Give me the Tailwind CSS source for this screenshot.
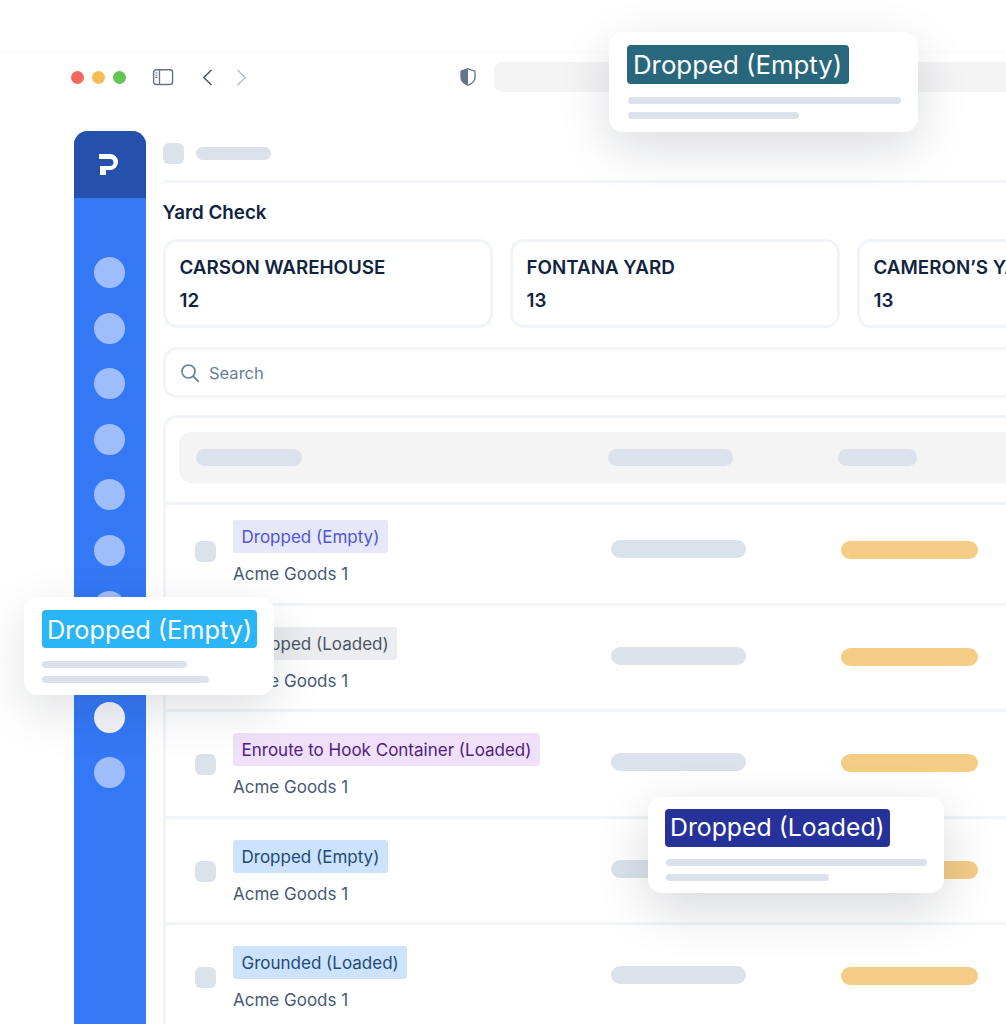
<!DOCTYPE html>
<html>
<head>
<meta charset="utf-8">
<script src="https://cdn.jsdelivr.net/npm/@tailwindcss/browser@4"></script>
</head>
<body class="bg-white font-['Inter',sans-serif]">
<div class="relative w-[1006px] h-[1024px] overflow-hidden bg-white">
  <!-- browser chrome -->
  <div class="mt-[51px] h-[1px] bg-[#fafbfc]"></div>
  <div class="flex items-center h-[50px] pl-[71px]">
    <div class="flex gap-[8px] shrink-0">
      <span class="w-[13px] h-[13px] rounded-full bg-[#f0695e]"></span>
      <span class="w-[13px] h-[13px] rounded-full bg-[#f6bd52]"></span>
      <span class="w-[13px] h-[13px] rounded-full bg-[#62c554]"></span>
    </div>
    <svg class="ml-[26px] shrink-0" width="22" height="18" viewBox="0 0 22 18" fill="none"><rect x="1.600" y="1.700" width="19" height="14.800" rx="2.500" stroke="#64748b" stroke-width="1.400"/><path d="M7.500 1.700v14.800" stroke="#64748b" stroke-width="1.300"/><path d="M3.500 5h2M3.500 7.200h2M3.500 9.400h2" stroke="#64748b" stroke-width="1.100"/></svg>
    <svg class="ml-[28px] shrink-0" width="11" height="17" viewBox="0 0 11 17" fill="none"><path d="M9.500 1 1.800 8.500l7.700 7.500" stroke="#475569" stroke-width="1.500"/></svg>
    <svg class="ml-[23px] shrink-0" width="11" height="17" viewBox="0 0 11 17" fill="none"><path d="M1.500 1 9.200 8.500 1.500 16" stroke="#b8c0cc" stroke-width="1.500"/></svg>
    <svg class="ml-[213px] shrink-0" width="16" height="18" viewBox="0 0 16 18" fill="none"><path d="M8 .8 15 3.200v6.300c0 3.600-3 6.200-7 7.700-4-1.500-7-4.100-7-7.700V3.200z" stroke="#64748b" stroke-width="1.300" fill="#fff"/><path d="M8 .8 1 3.200v6.300c0 3.600 3 6.200 7 7.700z" fill="#64748b"/></svg>
    <div class="ml-[18px] w-[520px] h-[30px] rounded-[8px] bg-[#f4f4f5] shrink-0"></div>
  </div>
  <div class="flex gap-[17px] pl-[74px] mt-[29px]">
    <!-- sidebar -->
    <div class="w-[72px] h-[893px] shrink-0 rounded-t-[14px] bg-[#3478f6] overflow-hidden">
      <div class="h-[67px] bg-[#2551ad] flex items-center justify-center pr-[3px]">
        <svg width="20" height="21" viewBox="0 0 20 21" fill="#fff"><path d="M0 0h11a8 8 0 0 1 0 16H7v5H1v-9h10a3 3 0 0 0 0-7H0z"/></svg>
      </div>
      <div class="flex flex-col items-center gap-[24.600px] pt-[59px] pr-[2px]">
        <span class="w-[31px] h-[31px] rounded-full bg-[#9fbcfb]"></span>
        <span class="w-[31px] h-[31px] rounded-full bg-[#9fbcfb]"></span>
        <span class="w-[31px] h-[31px] rounded-full bg-[#9fbcfb]"></span>
        <span class="w-[31px] h-[31px] rounded-full bg-[#9fbcfb]"></span>
        <span class="w-[31px] h-[31px] rounded-full bg-[#9fbcfb]"></span>
        <span class="w-[31px] h-[31px] rounded-full bg-[#9fbcfb]"></span>
        <span class="w-[31px] h-[31px] rounded-full bg-[#9fbcfb]"></span>
        <span class="w-[31px] h-[31px] rounded-full bg-[#9fbcfb]"></span>
        <span class="w-[31px] h-[31px] rounded-full bg-[#f3f5f9]"></span>
        <span class="w-[31px] h-[31px] rounded-full bg-[#9fbcfb]"></span>
      </div>
    </div>
    <!-- main -->
    <div class="w-[900px] shrink-0">
      <div class="flex items-center gap-[12px] h-[52px] pb-[5px] border-b-[3px] border-[#f1f4f9]">
        <span class="w-[21px] h-[21px] rounded-[6px] bg-[#dce2ec] -ml-[0.500px]"></span>
        <span class="w-[75px] h-[13px] rounded-full bg-[#dce2ec]"></span>
      </div>
      <h1 class="mt-[18px] text-[18.800px] leading-[24px] font-semibold -ml-[0.500px] text-[#0f2440]">Yard Check</h1>
      <div class="flex gap-[17px] mt-[14px]">
        <div class="w-[330px] h-[89px] shrink-0 border-[3px] border-[#f1f5f9] rounded-[14px] pl-[13.500px] pt-[14px] text-[18.800px] font-semibold text-[#0f2440]"><div class="leading-[24px]">CARSON WAREHOUSE</div><div class="leading-[24px] mt-[9px]">12</div></div>
        <div class="w-[330px] h-[89px] shrink-0 border-[3px] border-[#f1f5f9] rounded-[14px] pl-[13.500px] pt-[14px] text-[18.800px] font-semibold text-[#0f2440]"><div class="leading-[24px]">FONTANA YARD</div><div class="leading-[24px] mt-[9px]">13</div></div>
        <div class="w-[330px] h-[89px] shrink-0 border-[3px] border-[#f1f5f9] rounded-[14px] pl-[13.500px] pt-[14px] text-[18.800px] font-semibold text-[#0f2440]"><div class="leading-[24px] whitespace-nowrap">CAMERON’S YARD</div><div class="leading-[24px] mt-[9px]">13</div></div>
      </div>
      <div class="mt-[19px] h-[51px] border-[3px] border-[#f1f5f9] rounded-[14px] flex items-center pl-[14px] gap-[9px]">
        <svg class="shrink-0" width="20" height="20" viewBox="0 0 20 20" fill="none"><circle cx="8.500" cy="8.500" r="6.500" stroke="#64809c" stroke-width="1.700"/><path d="m13.300 13.300 5 5" stroke="#64809c" stroke-width="1.700" stroke-linecap="round"/></svg>
        <span class="mt-[2px] text-[16.500px] text-[#64809c]">Search</span>
      </div>
      <div class="mt-[17px] border-[3px] border-[#f1f5f9] rounded-t-[14px] pt-[14px]">
        <div class="ml-[13px] h-[51px] rounded-[12px] bg-[#f4f4f5]">
          <div class="flex items-center h-full pl-[17px]">
            <span class="w-[106px] h-[17px] rounded-full bg-[#dce2ec]"></span>
            <span class="ml-[306px] w-[125px] h-[17px] rounded-full bg-[#dce2ec]"></span>
            <span class="ml-[105px] w-[79px] h-[17px] rounded-full bg-[#dce2ec]"></span>
          </div>
        </div>
        <div class="mt-[18.500px] flex flex-col">
          <div class="h-[101px] border-t-[3px] border-[#f1f5f9] flex items-start pl-[29px] pt-[15px]">
            <span class="mt-[21px] w-[21px] h-[21px] rounded-[6px] bg-[#dce2ec] shrink-0"></span>
            <div class="ml-[17px] w-[378px] shrink-0">
              <span class="inline-block align-top h-[33px] leading-[35px] px-[8.500px] rounded-[3px] text-[17px] bg-[#e7e7fb] text-[#4f55d8]">Dropped (Empty)</span>
              <div class="mt-[9px] text-[17px] leading-[24px] text-[#475a75]">Acme Goods 1</div>
            </div>
            <span class="mt-[20px] w-[135px] h-[18px] rounded-full bg-[#dce2ec] shrink-0"></span>
            <span class="mt-[21px] ml-[95px] w-[137px] h-[18px] rounded-full bg-[#f5cd87] shrink-0"></span>
          </div>
          <div class="h-[106.500px] border-t-[3px] border-[#f1f5f9] flex items-start pl-[29px] pt-[21px]">
            <span class="mt-[21px] w-[21px] h-[21px] rounded-[6px] bg-[#dce2ec] shrink-0"></span>
            <div class="ml-[17px] w-[378px] shrink-0">
              <span class="inline-block align-top h-[33px] leading-[35px] px-[8.500px] rounded-[3px] text-[17px] bg-[#ebedf0] text-[#4a5568]">Dropped (Loaded)</span>
              <div class="mt-[9px] text-[17px] leading-[24px] text-[#475a75]">Acme Goods 1</div>
            </div>
            <span class="mt-[20px] w-[135px] h-[18px] rounded-full bg-[#dce2ec] shrink-0"></span>
            <span class="mt-[21px] ml-[95px] w-[137px] h-[18px] rounded-full bg-[#f5cd87] shrink-0"></span>
          </div>
          <div class="h-[106.500px] border-t-[3px] border-[#f1f5f9] flex items-start pl-[29px] pt-[21px]">
            <span class="mt-[21px] w-[21px] h-[21px] rounded-[6px] bg-[#dce2ec] shrink-0"></span>
            <div class="ml-[17px] w-[378px] shrink-0">
              <span class="inline-block align-top h-[33px] leading-[35px] px-[8.500px] rounded-[3px] text-[17px] bg-[#f0e0fa] text-[#4f1f7e] whitespace-nowrap">Enroute to Hook Container (Loaded)</span>
              <div class="mt-[9px] text-[17px] leading-[24px] text-[#475a75]">Acme Goods 1</div>
            </div>
            <span class="mt-[20px] w-[135px] h-[18px] rounded-full bg-[#dce2ec] shrink-0"></span>
            <span class="mt-[21px] ml-[95px] w-[137px] h-[18px] rounded-full bg-[#f5cd87] shrink-0"></span>
          </div>
          <div class="h-[106.500px] border-t-[3px] border-[#f1f5f9] flex items-start pl-[29px] pt-[21px]">
            <span class="mt-[21px] w-[21px] h-[21px] rounded-[6px] bg-[#dce2ec] shrink-0"></span>
            <div class="ml-[17px] w-[378px] shrink-0">
              <span class="inline-block align-top h-[33px] leading-[35px] px-[8.500px] rounded-[3px] text-[17px] bg-[#cde2fb] text-[#1e4a78]">Dropped (Empty)</span>
              <div class="mt-[9px] text-[17px] leading-[24px] text-[#475a75]">Acme Goods 1</div>
            </div>
            <span class="mt-[20px] w-[135px] h-[18px] rounded-full bg-[#dce2ec] shrink-0"></span>
            <span class="mt-[21px] ml-[95px] w-[137px] h-[18px] rounded-full bg-[#f5cd87] shrink-0"></span>
          </div>
          <div class="h-[106.500px] border-t-[3px] border-[#f1f5f9] flex items-start pl-[29px] pt-[21px]">
            <span class="mt-[21px] w-[21px] h-[21px] rounded-[6px] bg-[#dce2ec] shrink-0"></span>
            <div class="ml-[17px] w-[378px] shrink-0">
              <span class="inline-block align-top h-[33px] leading-[35px] px-[8.500px] rounded-[3px] text-[17px] bg-[#cde2fb] text-[#1e4a78]">Grounded (Loaded)</span>
              <div class="mt-[9px] text-[17px] leading-[24px] text-[#475a75]">Acme Goods 1</div>
            </div>
            <span class="mt-[20px] w-[135px] h-[18px] rounded-full bg-[#dce2ec] shrink-0"></span>
            <span class="mt-[21px] ml-[95px] w-[137px] h-[18px] rounded-full bg-[#f5cd87] shrink-0"></span>
          </div>
        </div>
      </div>
    </div>
  </div>

  <!-- floating cards -->
  <div class="absolute left-[609px] top-[32px] w-[309px] h-[100px] rounded-[14px] bg-white shadow-[0_16px_50px_rgba(15,23,42,0.15)] pt-[13px] px-[18px]">
    <span class="block w-[222px] h-[39px] leading-[39px] px-[6px] rounded-[4px] text-[25.800px] whitespace-nowrap bg-[#29687c] text-white">Dropped (Empty)</span>
    <div class="mt-[13px] ml-[1px] w-[273px] h-[7px] rounded-full bg-[#dce2ec]"></div>
    <div class="mt-[8px] ml-[1px] w-[171px] h-[7px] rounded-full bg-[#dce2ec]"></div>
  </div>
  <div class="absolute left-[24px] top-[597px] w-[250px] h-[98px] rounded-[14px] bg-white shadow-[0_16px_50px_rgba(15,23,42,0.13)] pt-[13px] px-[18px]">
    <span class="block w-[215px] h-[38px] leading-[40px] px-[5px] rounded-[4px] text-[25.300px] whitespace-nowrap bg-[#2bb5f9] text-white">Dropped (Empty)</span>
    <div class="mt-[13px] w-[145px] h-[7px] rounded-full bg-[#dce2ec]"></div>
    <div class="mt-[8px] w-[167px] h-[7px] rounded-full bg-[#dce2ec]"></div>
  </div>
  <div class="absolute left-[648px] top-[797px] w-[296px] h-[96px] rounded-[14px] bg-white shadow-[0_16px_50px_rgba(15,23,42,0.17)] pt-[12px] pl-[17px]">
    <span class="block w-[225px] h-[38px] leading-[36px] px-[5px] rounded-[4px] text-[24.800px] whitespace-nowrap bg-[#26319a] text-white">Dropped (Loaded)</span>
    <div class="mt-[12px] ml-[1px] w-[261px] h-[7px] rounded-full bg-[#dce2ec]"></div>
    <div class="mt-[8px] ml-[1px] w-[163px] h-[7px] rounded-full bg-[#dce2ec]"></div>
  </div>
</div>
</body>
</html>
